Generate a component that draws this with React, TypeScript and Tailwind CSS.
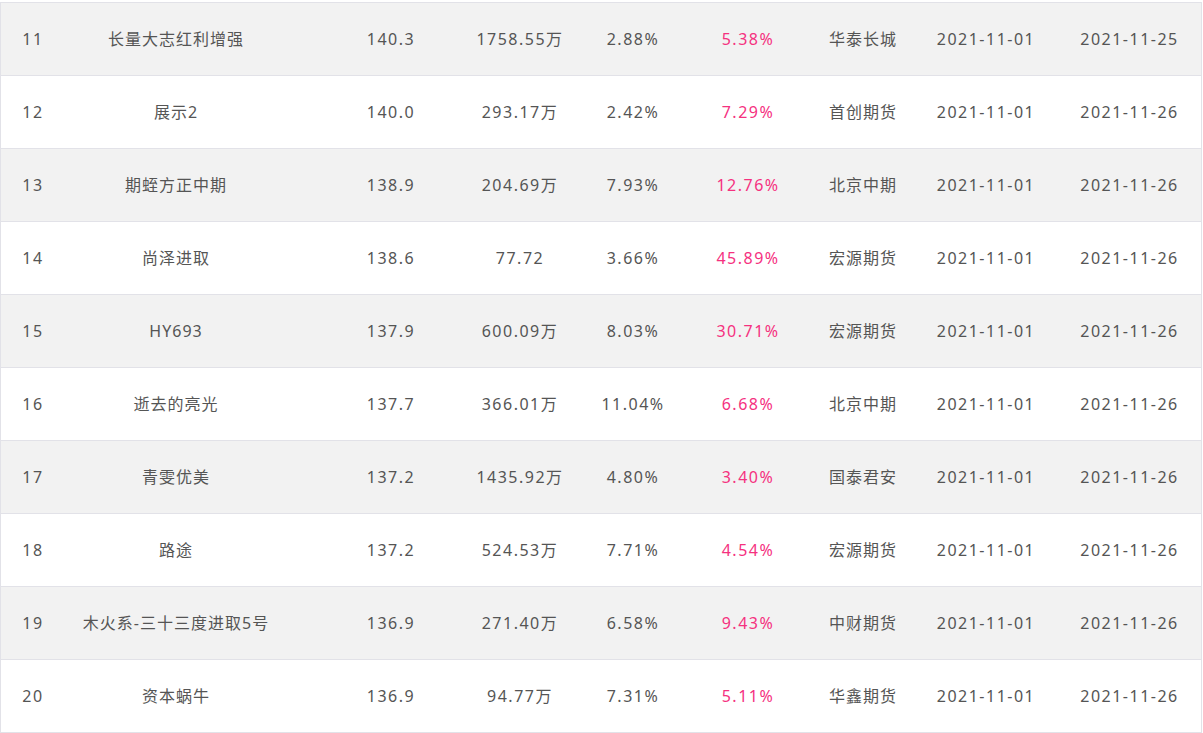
const rows = [
  { rank: 11, name: '长量大志红利增强', score: '140.3', scale: '1758.55万', dd: '2.88%', ret: '5.38%', broker: '华泰长城', start: '2021-11-01', end: '2021-11-25' },
  { rank: 12, name: '展示2', score: '140.0', scale: '293.17万', dd: '2.42%', ret: '7.29%', broker: '首创期货', start: '2021-11-01', end: '2021-11-26' },
  { rank: 13, name: '期蛭方正中期', score: '138.9', scale: '204.69万', dd: '7.93%', ret: '12.76%', broker: '北京中期', start: '2021-11-01', end: '2021-11-26' },
  { rank: 14, name: '尚泽进取', score: '138.6', scale: '77.72', dd: '3.66%', ret: '45.89%', broker: '宏源期货', start: '2021-11-01', end: '2021-11-26' },
  { rank: 15, name: 'HY693', score: '137.9', scale: '600.09万', dd: '8.03%', ret: '30.71%', broker: '宏源期货', start: '2021-11-01', end: '2021-11-26' },
  { rank: 16, name: '逝去的亮光', score: '137.7', scale: '366.01万', dd: '11.04%', ret: '6.68%', broker: '北京中期', start: '2021-11-01', end: '2021-11-26' },
  { rank: 17, name: '青雯优美', score: '137.2', scale: '1435.92万', dd: '4.80%', ret: '3.40%', broker: '国泰君安', start: '2021-11-01', end: '2021-11-26' },
  { rank: 18, name: '路途', score: '137.2', scale: '524.53万', dd: '7.71%', ret: '4.54%', broker: '宏源期货', start: '2021-11-01', end: '2021-11-26' },
  { rank: 19, name: '木火系-三十三度进取5号', score: '136.9', scale: '271.40万', dd: '6.58%', ret: '9.43%', broker: '中财期货', start: '2021-11-01', end: '2021-11-26' },
  { rank: 20, name: '资本蜗牛', score: '136.9', scale: '94.77万', dd: '7.31%', ret: '5.11%', broker: '华鑫期货', start: '2021-11-01', end: '2021-11-26' },
];

const cell = 'flex items-center justify-center whitespace-nowrap';
const num = 'tracking-[1.5px]';

export default function App() {
  return (
    <div className="bg-white pt-[2px] w-[1203px] h-[733px] overflow-hidden">
      <div
        className="w-[1202px] border-l border-r border-b border-[#e2e2e8] text-[16px] tracking-[1px] text-[#555555]"
        style={{ fontFamily: '"Noto Sans", "Noto Sans CJK SC", sans-serif' }}
      >
        {rows.map((r, i) => (
          <div
            key={r.rank}
            className={`grid grid-cols-[59px_240px_156px_120px_114px_116px_118px_134px_143px] h-[73px] border-t border-[#e2e2e8] ${
              i % 2 === 0 ? 'bg-[#f2f2f2]' : 'bg-white'
            }`}
          >
            <div className={`${cell} ${num} pl-[5px]`}>{r.rank}</div>
            <div className={`${cell} pr-[8px]`}>{r.name}</div>
            <div className={`${cell} ${num} pl-[26px]`}>{r.score}</div>
            <div className={`${cell} ${num} pl-[8px]`}>{r.scale}</div>
            <div className={`${cell} ${num}`}>{r.dd}</div>
            <div className={`${cell} ${num} text-[#f5317f]`}>{r.ret}</div>
            <div className={`${cell} pr-[4px]`}>{r.broker}</div>
            <div className={`${cell} ${num} pr-[10px]`}>{r.start}</div>
            <div className={`${cell} ${num}`}>{r.end}</div>
          </div>
        ))}
      </div>
    </div>
  );
}
